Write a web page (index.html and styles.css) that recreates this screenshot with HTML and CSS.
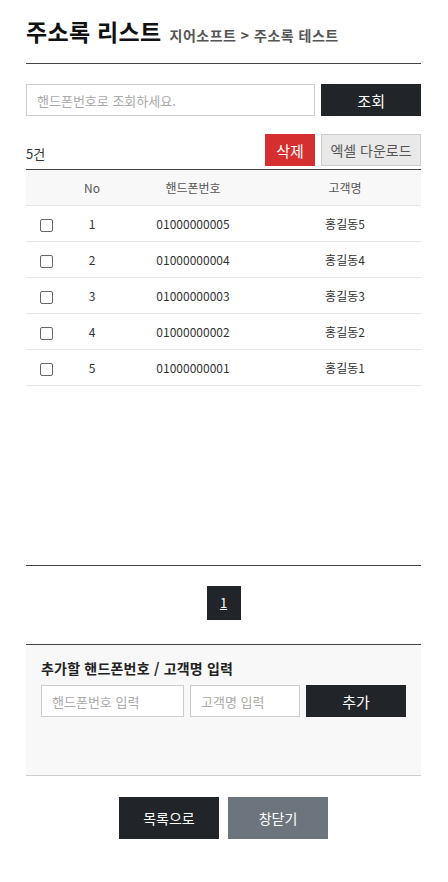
FILE: index.html
```html
<!DOCTYPE html>
<html lang="ko">
<head>
<meta charset="utf-8">
<title>주소록 리스트</title>
<link rel="stylesheet" href="styles.css">
</head>
<body>
<div class="page">
  <header class="head">
    <h1 class="title">주소록 리스트</h1>
    <span class="crumb">지어소프트 &gt; 주소록 테스트</span>
  </header>

  <form class="search">
    <input class="field search-field" type="text" placeholder="핸드폰번호로 조회하세요.">
    <button type="button" class="btn btn-dark search-btn">조회</button>
  </form>

  <div class="actions">
    <span class="count">5건</span>
    <div class="action-btns">
      <button type="button" class="btn btn-red">삭제</button>
      <button type="button" class="btn btn-light">엑셀 다운로드</button>
    </div>
  </div>

  <div class="list">
    <div class="row row-head">
      <span></span>
      <span>No</span>
      <span>핸드폰번호</span>
      <span>고객명</span>
    </div>
    <div class="row"><span><i class="chk"></i></span><span>1</span><span>01000000005</span><span>홍길동5</span></div>
    <div class="row"><span><i class="chk"></i></span><span>2</span><span>01000000004</span><span>홍길동4</span></div>
    <div class="row"><span><i class="chk"></i></span><span>3</span><span>01000000003</span><span>홍길동3</span></div>
    <div class="row"><span><i class="chk"></i></span><span>4</span><span>01000000002</span><span>홍길동2</span></div>
    <div class="row"><span><i class="chk"></i></span><span>5</span><span>01000000001</span><span>홍길동1</span></div>
  </div>

  <nav class="pager"><a class="page-num" href="#">1</a></nav>

  <section class="add">
    <h2 class="add-title">추가할 핸드폰번호 / 고객명 입력</h2>
    <div class="add-row">
      <input class="field phone-field" type="text" placeholder="핸드폰번호 입력">
      <input class="field name-field" type="text" placeholder="고객명 입력">
      <button type="button" class="btn btn-dark add-btn">추가</button>
    </div>
  </section>

  <div class="bottom">
    <button type="button" class="btn btn-dark big">목록으로</button>
    <button type="button" class="btn btn-gray big">창닫기</button>
  </div>
</div>
</body>
</html>
```

FILE: styles.css
```css
* { box-sizing: border-box; }
body {
  margin: 0;
  background: #fff;
  font-family: "Malgun Gothic", "Noto Sans CJK KR", sans-serif;
  color: #333;
}
.page {
  padding: 0 27px 40px 26px;
}
.head {
  display: flex;
  align-items: baseline;
  gap: 8px;
  padding-top: 17px;
  padding-bottom: 18px;
  border-bottom: 1px solid #444;
  height: 64px;
}
.title {
  margin: 0;
  font-size: 23px;
  line-height: 28px;
  font-weight: 700;
  color: #111;
  letter-spacing: 0.3px;
}
.crumb {
  font-size: 14px;
  font-weight: 700;
  color: #555;
  letter-spacing: 0.5px;
}
.search {
  display: flex;
  gap: 6px;
  margin: 20px 0 0;
  height: 32px;
}
.field {
  border: 1px solid #ccc;
  background: #fff;
  height: 32px;
  padding: 0 10px;
  font-family: inherit;
  font-size: 13px;
  color: #333;
  outline: none;
}
.field::placeholder { color: #aaa; }
.search-field { width: 290px; }
.btn {
  border: 0;
  font-family: inherit;
  cursor: pointer;
  padding: 0;
}
.btn-dark { background: #212529; color: #fff; }
.btn-gray { background: #6c757d; color: #fff; }
.btn-red { background: #d62f30; color: #fff; }
.btn-light { background: #e9e9e9; color: #555; border: 1px solid #ccc; }
.search-btn { width: 100px; height: 32px; font-size: 15px; }
.actions {
  display: flex;
  justify-content: space-between;
  align-items: flex-end;
  margin-top: 18px;
  height: 32px;
}
.count { font-size: 13px; color: #333; line-height: 20px; margin-bottom: 2px; }
.action-btns { display: flex; gap: 6px; }
.action-btns .btn { height: 32px; }
.btn-red { width: 50px; font-size: 15px; }
.btn-light { width: 100px; font-size: 14px; }
.list {
  margin-top: 3px;
  height: 397px;
  border-top: 1px solid #444;
  border-bottom: 1px solid #444;
}
.row {
  display: grid;
  grid-template-columns: 41px 50px 152px 152px;
  align-items: center;
  height: 36px;
  border-bottom: 1px solid #e5e5e5;
  font-size: 12px;
  color: #333;
}
.row span { text-align: center; }
.row-head { background: #f8f8f8; color: #555; font-size: 12px; }
.chk {
  display: inline-block;
  width: 13px;
  height: 13px;
  border: 1px solid #666;
  border-radius: 2px;
  vertical-align: middle;
  background: #fff;
}
.pager {
  display: flex;
  justify-content: center;
  margin-top: 20px;
}
.page-num {
  width: 34px;
  height: 34px;
  background: #212529;
  color: #fff;
  font-size: 13px;
  line-height: 34px;
  text-align: center;
  text-decoration: underline;
}
.add {
  margin-top: 24px;
  height: 132px;
  background: #f8f8f8;
  border-top: 1px solid #444;
  border-bottom: 1px solid #ccc;
  padding: 14px 15px 0;
}
.add-title {
  margin: 0 0 7px;
  font-size: 14px;
  line-height: 19px;
  font-weight: 700;
  color: #222;
  letter-spacing: 0.2px;
}
.add-row { display: flex; gap: 6px; }
.phone-field { width: 143px; }
.name-field { width: 110px; }
.add-btn { width: 100px; height: 32px; font-size: 15px; }
.bottom {
  display: flex;
  justify-content: center;
  gap: 9px;
  margin-top: 21px;
}
.big { width: 100px; height: 42px; font-size: 14px; }
```
